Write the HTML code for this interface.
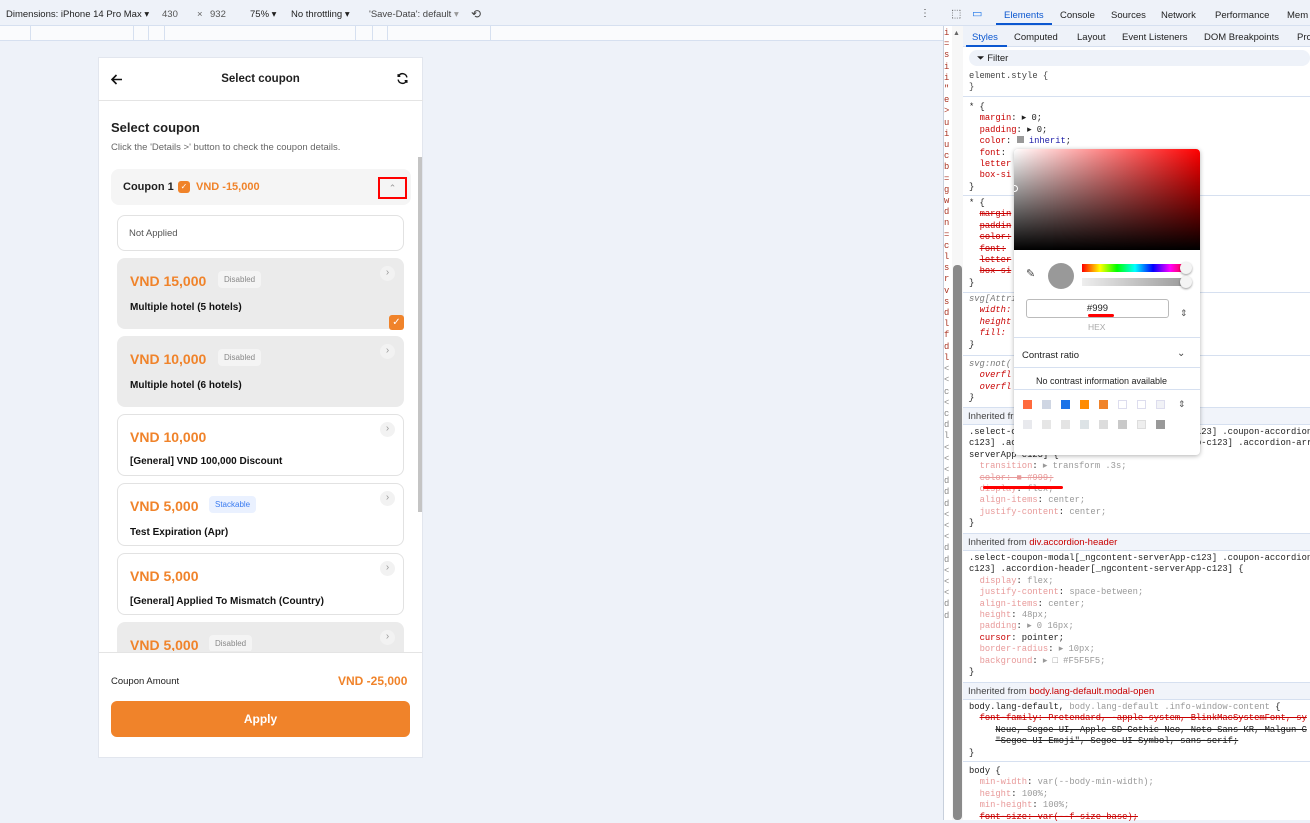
<!DOCTYPE html>
<html><head><meta charset="utf-8"><style>
*{margin:0;padding:0;box-sizing:border-box}
body{width:1310px;height:820px;overflow:hidden;position:relative;background:#eef2f9;font-family:"Liberation Sans",sans-serif;font-size:10px;color:#1f1f1f}
.a{position:absolute;white-space:nowrap}
.m{font-family:"Liberation Mono",monospace;font-size:8.8px;line-height:11.4px}
.p{color:#c80000}.pl{color:#e89a9a}.v{color:#1a1aa6}.g{color:#999}.s{text-decoration:line-through}
.or{color:#f0832a}
.card{position:absolute;left:117px;width:287px;border-radius:8px;border:1px solid #e2e2e2;background:#fff}
.card.d{background:#ebebeb;border-color:#ebebeb}
.amt{position:absolute;left:12px;top:14px;font-size:14px;font-weight:bold;color:#f0832a}
.nm{position:absolute;left:12px;font-size:10px;font-weight:bold;color:#111}
.tag{position:absolute;top:12px;font-size:8px;padding:4px 6px;border-radius:4px}
.dis{background:#f4f4f4;color:#888}
.stk{background:#eaf1ff;color:#3a7bf0}
.chev{position:absolute;right:8px;top:7px;width:15px;height:15px;border-radius:50%;background:#f2f2f2;color:#999;font-size:10px;text-align:center;line-height:14px}
.hr{position:absolute;left:963px;width:347px;height:1px;background:#d6e0f0}
.band{position:absolute;left:963px;width:347px;height:18px;background:#f1f4fa;border-top:1px solid #d6e0f0;border-bottom:1px solid #d6e0f0;padding:3px 5px;font-size:9.5px;color:#444}
</style></head><body>
<div class="a" style="left:0;top:0;width:943px;height:26px;background:#eef2f9;border-bottom:1px solid #d6e0f0"></div>
<div class="a" style="left:6px;top:9px;font-size:9.5px">Dimensions: iPhone 14 Pro Max ▾</div>
<div class="a" style="left:162px;top:9px;font-size:9.5px;color:#555">430</div>
<div class="a" style="left:197px;top:9px;font-size:9.5px;color:#666">×</div>
<div class="a" style="left:210px;top:9px;font-size:9.5px;color:#555">932</div>
<div class="a" style="left:250px;top:9px;font-size:9.5px">75% ▾</div>
<div class="a" style="left:291px;top:9px;font-size:9.5px">No throttling ▾</div>
<div class="a" style="left:369px;top:9px;font-size:9.5px;color:#444">'Save-Data': default <span style="color:#999">▾</span></div>
<div class="a" style="left:471px;top:7px;font-size:12px;color:#444">⟲</div>
<div class="a" style="left:920px;top:8px;font-size:10px;color:#444">⋮</div>
<div class="a" style="left:0;top:26px;width:943px;height:15px;background:#fafbfd;border-bottom:1px solid #d6e0f0"></div>
<div class="a" style="left:30px;top:26px;width:1px;height:15px;background:#d6e0f0"></div>
<div class="a" style="left:133px;top:26px;width:1px;height:15px;background:#d6e0f0"></div>
<div class="a" style="left:148px;top:26px;width:1px;height:15px;background:#d6e0f0"></div>
<div class="a" style="left:164px;top:26px;width:1px;height:15px;background:#d6e0f0"></div>
<div class="a" style="left:355px;top:26px;width:1px;height:15px;background:#d6e0f0"></div>
<div class="a" style="left:372px;top:26px;width:1px;height:15px;background:#d6e0f0"></div>
<div class="a" style="left:387px;top:26px;width:1px;height:15px;background:#d6e0f0"></div>
<div class="a" style="left:490px;top:26px;width:1px;height:15px;background:#d6e0f0"></div>

<div class="a" style="left:98px;top:57px;width:325px;height:701px;background:#fff;border:1px solid #e2e6ee"></div>
<div class="a" style="left:98px;top:100px;width:325px;height:1px;background:#e4e4e4"></div>
<svg class="a" style="left:110px;top:73px" width="13" height="13" viewBox="0 0 13 13"><path d="M12 6.5H2M6.5 2L2 6.5 6.5 11" stroke="#111" stroke-width="1.6" fill="none"/></svg>
<div class="a" style="left:98px;top:73px;width:325px;text-align:center;font-size:11.5px;font-weight:bold">Select coupon</div>
<svg class="a" style="left:396px;top:72px" width="13" height="13" viewBox="0 0 24 24"><path d="M20 10A8 8 0 0 0 5.5 6.5L4 8M4 4v4h4M4 14a8 8 0 0 0 14.5 3.5L20 16M20 20v-4h-4" stroke="#111" stroke-width="2.6" fill="none"/></svg>
<div class="a" style="left:111px;top:120px;font-size:13px;font-weight:bold">Select coupon</div>
<div class="a" style="left:111px;top:142px;font-size:9.5px;color:#666">Click the 'Details &gt;' button to check the coupon details.</div>
<div class="a" style="left:418px;top:157px;width:4px;height:355px;background:#c4c4c4"></div>
<div class="a" style="left:111px;top:169px;width:300px;height:36px;background:#f5f5f5;border-radius:8px"></div>
<div class="a" style="left:123px;top:181px;font-size:11px;font-weight:bold">Coupon 1</div>
<div class="a" style="left:178px;top:181px;width:12px;height:12px;background:#f0832a;border-radius:3px;color:#fff;font-size:8px;text-align:center;line-height:12px">✓</div>
<div class="a" style="left:196px;top:181px;font-size:11px;font-weight:bold;color:#f0832a">VND -15,000</div>
<div class="a" style="left:378px;top:177px;width:29px;height:22px;border:2px solid #f00;background:#f5f5f5;color:#999;font-size:9px;text-align:center;line-height:18px">⌃</div>
<div class="card" style="top:215px;height:36px"><div class="a" style="left:11px;top:12px;font-size:9.5px;color:#555">Not Applied</div></div>
<div class="card d" style="top:258px;height:71px"><div class="amt">VND 15,000</div><div class="tag dis" style="left:100px">Disabled</div><div class="chev">›</div><div class="nm" style="top:43px">Multiple hotel (5 hotels)</div>
<div class="a" style="left:271px;top:56px;width:15px;height:15px;background:#f0832a;border-radius:3px;color:#fff;font-size:10px;text-align:center;line-height:15px">✓</div></div>
<div class="card d" style="top:336px;height:71px"><div class="amt">VND 10,000</div><div class="tag dis" style="left:100px">Disabled</div><div class="chev">›</div><div class="nm" style="top:43px">Multiple hotel (6 hotels)</div></div>
<div class="card" style="top:414px;height:62px"><div class="amt">VND 10,000</div><div class="chev">›</div><div class="nm" style="top:41px">[General] VND 100,000 Discount</div></div>
<div class="card" style="top:483px;height:63px"><div class="amt">VND 5,000</div><div class="tag stk" style="left:91px">Stackable</div><div class="chev">›</div><div class="nm" style="top:43px">Test Expiration (Apr)</div></div>
<div class="card" style="top:553px;height:62px"><div class="amt">VND 5,000</div><div class="chev">›</div><div class="nm" style="top:42px">[General] Applied To Mismatch (Country)</div></div>
<div class="card d" style="top:622px;height:30px;border-radius:8px 8px 0 0;overflow:hidden"><div class="amt">VND 5,000</div><div class="tag dis" style="left:91px">Disabled</div><div class="chev">›</div></div>
<div class="a" style="left:99px;top:652px;width:323px;height:1px;background:#e4e4e4"></div>
<div class="a" style="left:111px;top:676px;font-size:9.5px;color:#222">Coupon Amount</div>
<div class="a" style="left:338px;top:674px;font-size:12px;font-weight:bold;color:#f0832a">VND -25,000</div>
<div class="a" style="left:111px;top:701px;width:299px;height:36px;background:#f0832a;border-radius:6px;color:#fff;font-weight:bold;font-size:12px;text-align:center;line-height:36px">Apply</div>

<div class="a" style="left:943px;top:0;width:367px;height:820px;background:#fff;border-left:1px solid #c8d0dc"></div>
<div class="a" style="left:943px;top:0;width:367px;height:26px;background:#eef2f9;border-bottom:1px solid #d6e0f0"></div>
<div class="a" style="left:951px;top:7px;font-size:11px;color:#555">⬚</div>
<div class="a" style="left:972px;top:7px;font-size:11px;color:#1a73e8">▭</div>
<div class="a" style="left:1004px;top:10px;font-size:9.5px;color:#0b57d0">Elements</div>
<div class="a" style="left:996px;top:23px;width:56px;height:2px;background:#0b57d0"></div>
<div class="a" style="left:1060px;top:10px;font-size:9.5px">Console</div>
<div class="a" style="left:1111px;top:10px;font-size:9.5px">Sources</div>
<div class="a" style="left:1161px;top:10px;font-size:9.5px">Network</div>
<div class="a" style="left:1215px;top:10px;font-size:9.5px">Performance</div>
<div class="a" style="left:1287px;top:10px;font-size:9.5px">Mem</div>
<div class="a" style="left:963px;top:26px;width:347px;height:21px;background:#eef2f9;border-bottom:1px solid #d6e0f0"></div>
<div class="a" style="left:972px;top:32px;font-size:9.5px;color:#0b57d0">Styles</div>
<div class="a" style="left:966px;top:45px;width:41px;height:2px;background:#0b57d0"></div>
<div class="a" style="left:1014px;top:32px;font-size:9.5px">Computed</div>
<div class="a" style="left:1077px;top:32px;font-size:9.5px">Layout</div>
<div class="a" style="left:1122px;top:32px;font-size:9.5px">Event Listeners</div>
<div class="a" style="left:1204px;top:32px;font-size:9.5px">DOM Breakpoints</div>
<div class="a" style="left:1297px;top:32px;font-size:9.5px">Pro</div>
<div class="a" style="left:969px;top:50px;width:341px;height:16px;background:#eef2f9;border-radius:8px"></div>
<div class="a" style="left:977px;top:53px;font-size:9.5px">⏷ Filter</div>
<div class="a" style="left:952px;top:26px;width:11px;height:794px;background:#f7f7f7"></div>
<div class="a" style="left:953px;top:265px;width:9px;height:555px;background:#8a8a8a;border-radius:4px"></div>
<div class="a" style="left:953px;top:30px;font-size:7px;color:#666">▲</div>
<div class="a m" style="left:944px;top:28px;color:#a32;width:8px;overflow:hidden;white-space:pre;line-height:11.2px">i
=
s
i
i
"
e
&gt;
u
i
u
c
b
=
g
w
d
n
=
c
l
s
r
v
s
d
l
f
d
l
<span style="color:#888">&lt;
&lt;
c
&lt;
c
d
l
&lt;
&lt;
&lt;
d
d
d
&lt;
&lt;
&lt;
d
d
&lt;
&lt;
&lt;
d
d</span></div>

<div class="a m" style="left:969px;top:71px;color:#444">element.style {<br>}</div>
<div class="hr" style="top:96px"></div>
<div class="a m" style="left:969px;top:102px">* {<br>&nbsp;&nbsp;<span class="p">margin</span>: ▸ 0;<br>&nbsp;&nbsp;<span class="p">padding</span>: ▸ 0;<br>&nbsp;&nbsp;<span class="p">color</span>: <span style="display:inline-block;width:7px;height:7px;background:#999"></span> <span class="v">inherit</span>;<br>&nbsp;&nbsp;<span class="p">font</span>:<br>&nbsp;&nbsp;<span class="p">letter</span><br>&nbsp;&nbsp;<span class="p">box-si</span><br>}</div>
<div class="hr" style="top:195px"></div>
<div class="a m" style="left:969px;top:198px">* {<br>&nbsp;&nbsp;<span class="p s">margin</span><br>&nbsp;&nbsp;<span class="p s">paddin</span><br>&nbsp;&nbsp;<span class="p s">color:</span><br>&nbsp;&nbsp;<span class="p s">font:</span><br>&nbsp;&nbsp;<span class="p s">letter</span><br>&nbsp;&nbsp;<span class="p s">box si</span><br>}</div>
<div class="hr" style="top:292px"></div>
<div class="a m" style="left:969px;top:294px;font-style:italic;color:#777">svg[Attri<br>&nbsp;&nbsp;<span class="p">width:</span><br>&nbsp;&nbsp;<span class="p">height</span><br>&nbsp;&nbsp;<span class="p">fill:</span><br><span style="color:#222">}</span></div>
<div class="hr" style="top:355px"></div>
<div class="a m" style="left:969px;top:359px;font-style:italic;color:#777">svg:not(<br>&nbsp;&nbsp;<span class="p">overfl</span><br>&nbsp;&nbsp;<span class="p">overfl</span><br><span style="color:#222">}</span></div>
<div class="band" style="top:407px">Inherited fr</div>
<div class="a m" style="left:969px;top:427px;color:#222">.select-coupon-modal[_ngcontent-serverApp-c123] .coupon-accordion<br>c123] .accordion-header[_ngcontent-serverApp-c123] .accordion-arr<br>serverApp-c123] {<br>&nbsp;&nbsp;<span class="pl">transition</span>: <span class="g">▸ transform .3s;</span><br>&nbsp;&nbsp;<span class="pl s">color: ■ #999;</span><br>&nbsp;&nbsp;<span class="pl">display</span>: <span class="g">flex;</span><br>&nbsp;&nbsp;<span class="pl">align-items</span>: <span class="g">center;</span><br>&nbsp;&nbsp;<span class="pl">justify-content</span>: <span class="g">center;</span><br>}</div>
<div class="a" style="left:983px;top:486px;width:80px;height:3px;background:#f00;border-radius:2px"></div>
<div class="band" style="top:533px">Inherited from <span class="p">div.accordion-header</span></div>
<div class="a m" style="left:969px;top:553px;color:#222">.select-coupon-modal[_ngcontent-serverApp-c123] .coupon-accordion<br>c123] .accordion-header[_ngcontent-serverApp-c123] {<br>&nbsp;&nbsp;<span class="pl">display</span>: <span class="g">flex;</span><br>&nbsp;&nbsp;<span class="pl">justify-content</span>: <span class="g">space-between;</span><br>&nbsp;&nbsp;<span class="pl">align-items</span>: <span class="g">center;</span><br>&nbsp;&nbsp;<span class="pl">height</span>: <span class="g">48px;</span><br>&nbsp;&nbsp;<span class="pl">padding</span>: <span class="g">▸ 0 16px;</span><br>&nbsp;&nbsp;<span class="p">cursor</span>: pointer;<br>&nbsp;&nbsp;<span class="pl">border-radius</span>: <span class="g">▸ 10px;</span><br>&nbsp;&nbsp;<span class="pl">background</span>: <span class="g">▸ □ #F5F5F5;</span><br>}</div>
<div class="band" style="top:682px">Inherited from <span class="p">body.lang-default.modal-open</span></div>
<div class="a m" style="left:969px;top:702px;color:#222">body.lang-default, <span class="g">body.lang-default .info-window-content</span> {<br>&nbsp;&nbsp;<span class="p s">font-family: Pretendard, -apple-system, BlinkMacSystemFont, sy</span><br>&nbsp;&nbsp;&nbsp;&nbsp;&nbsp;<span class="s">Neue, Segoe UI, Apple SD Gothic Neo, Noto Sans KR, Malgun G</span><br>&nbsp;&nbsp;&nbsp;&nbsp;&nbsp;<span class="s">"Segoe UI Emoji", Segoe UI Symbol, sans-serif;</span><br>}</div>
<div class="hr" style="top:761px"></div>
<div class="a m" style="left:969px;top:766px;color:#222">body {<br>&nbsp;&nbsp;<span class="pl">min-width</span>: <span class="g">var(--body-min-width);</span><br>&nbsp;&nbsp;<span class="pl">height</span>: <span class="g">100%;</span><br>&nbsp;&nbsp;<span class="pl">min-height</span>: <span class="g">100%;</span><br>&nbsp;&nbsp;<span class="p s">font-size: var(--f-size-base);</span></div>

<div class="a" style="left:1014px;top:149px;width:186px;height:306px;background:#fff;border-radius:4px;box-shadow:0 1px 5px rgba(0,0,0,.3);overflow:hidden">
<div class="a" style="left:0;top:0;width:186px;height:101px;background:linear-gradient(to top,#000,rgba(0,0,0,0)),linear-gradient(to right,#fff,#f00)"></div>
<div class="a" style="left:-3px;top:36px;width:7px;height:7px;border:1px solid #fff;border-radius:50%"></div>
<div class="a" style="left:12px;top:118px;font-size:11px;color:#444">✎</div>
<div class="a" style="left:34px;top:114px;width:26px;height:26px;border-radius:50%;background:#999"></div>
<div class="a" style="left:68px;top:115px;width:106px;height:8px;background:linear-gradient(to right,#f00,#ff0 17%,#0f0 33%,#0ff 50%,#00f 67%,#f0f 83%,#f00)"></div>
<div class="a" style="left:166px;top:113px;width:12px;height:12px;border-radius:50%;background:#f4f4f4;box-shadow:0 1px 2px rgba(0,0,0,.4)"></div>
<div class="a" style="left:68px;top:129px;width:106px;height:8px;background:linear-gradient(to right,#eee,#999)"></div>
<div class="a" style="left:166px;top:127px;width:12px;height:12px;border-radius:50%;background:#f4f4f4;box-shadow:0 1px 2px rgba(0,0,0,.4)"></div>
<div class="a" style="left:12px;top:150px;width:143px;height:19px;border:1px solid #bbb;border-radius:3px;text-align:center;font-size:9.5px;line-height:17px">#999</div>
<div class="a" style="left:74px;top:165px;width:26px;height:3px;background:#f00;border-radius:2px"></div>
<div class="a" style="left:74px;top:173px;font-size:8.5px;color:#aaa">HEX</div>
<div class="a" style="left:166px;top:159px;font-size:9px;color:#555">⇕</div>
<div class="a" style="left:0;top:188px;width:186px;height:1px;background:#d6e0f0"></div>
<div class="a" style="left:8px;top:201px;font-size:9.5px">Contrast ratio</div>
<div class="a" style="left:163px;top:199px;font-size:10px;color:#444">⌄</div>
<div class="a" style="left:0;top:218px;width:186px;height:1px;background:#d6e0f0"></div>
<div class="a" style="left:22px;top:227px;font-size:9px">No contrast information available</div>
<div class="a" style="left:0;top:240px;width:186px;height:1px;background:#d6e0f0"></div>
<div class="a" style="left:9px;top:251px;width:9px;height:9px;background:#ff6a3d"></div>
<div class="a" style="left:28px;top:251px;width:9px;height:9px;background:#cfd6e3"></div>
<div class="a" style="left:47px;top:251px;width:9px;height:9px;background:#1a73e8"></div>
<div class="a" style="left:66px;top:251px;width:9px;height:9px;background:#ff8c00"></div>
<div class="a" style="left:85px;top:251px;width:9px;height:9px;background:#f0832a"></div>
<div class="a" style="left:104px;top:251px;width:9px;height:9px;border:1px solid #dde"></div>
<div class="a" style="left:123px;top:251px;width:9px;height:9px;border:1px solid #dde"></div>
<div class="a" style="left:142px;top:251px;width:9px;height:9px;background:#f1f2f6;border:1px solid #dde"></div>
<div class="a" style="left:164px;top:250px;font-size:9px;color:#555">⇕</div>
<div class="a" style="left:9px;top:271px;width:9px;height:9px;background:#e8e9ed"></div>
<div class="a" style="left:28px;top:271px;width:9px;height:9px;background:#e6e6e6"></div>
<div class="a" style="left:47px;top:271px;width:9px;height:9px;background:#e4e4e4"></div>
<div class="a" style="left:66px;top:271px;width:9px;height:9px;background:#dde3e6"></div>
<div class="a" style="left:85px;top:271px;width:9px;height:9px;background:#dcdcdc"></div>
<div class="a" style="left:104px;top:271px;width:9px;height:9px;background:#c9c9c9"></div>
<div class="a" style="left:123px;top:271px;width:9px;height:9px;background:#eee;border:1px solid #ddd"></div>
<div class="a" style="left:142px;top:271px;width:9px;height:9px;background:#999"></div>
</div>
</body></html>
